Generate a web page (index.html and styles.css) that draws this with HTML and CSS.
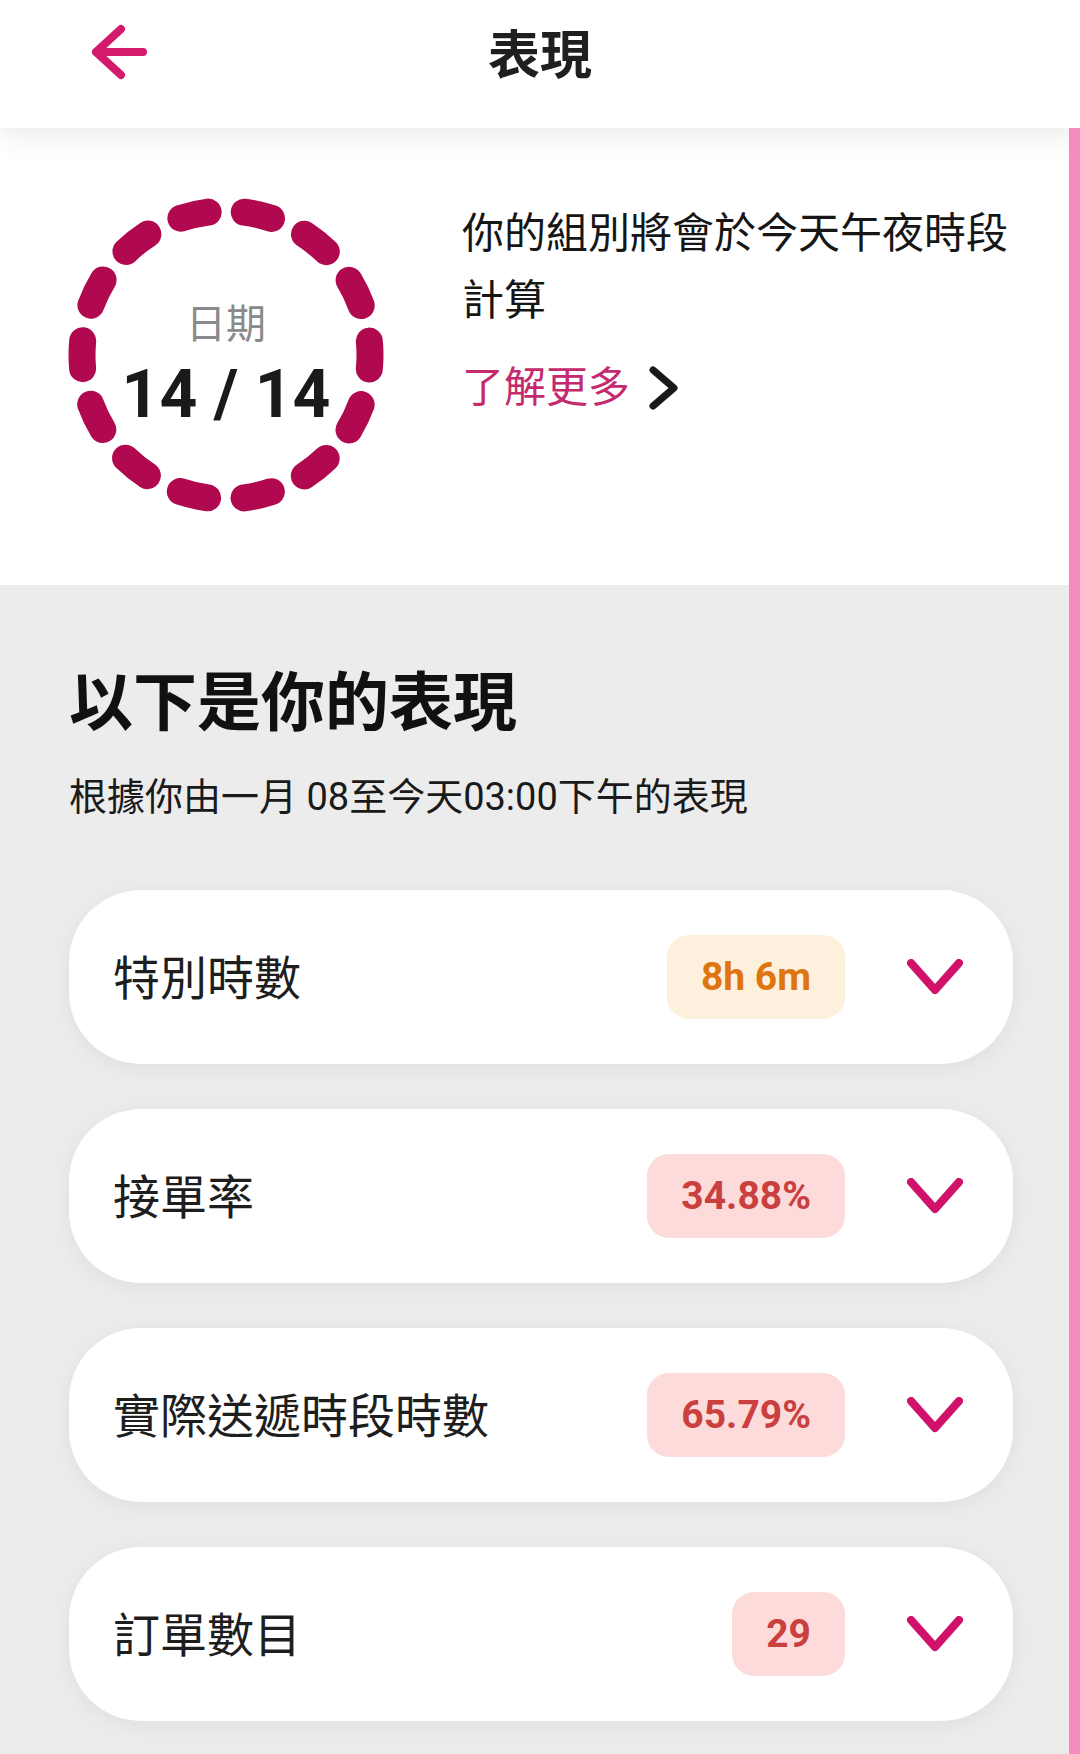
FILE: index.html
```html
<!DOCTYPE html>
<html>
<head>
  <meta charset="utf-8">
  <title>表現</title>
  <link rel="stylesheet" href="styles.css">
</head>

<body>
  <div class="page">
    <header class="topbar">
      <a class="back" href="#">
        <svg width="56" height="56" viewBox="0 0 56 56"><path d="M52 28H5M30 5L5 28l25 23" fill="none" stroke="#d41a6c" stroke-width="8" stroke-linecap="round" stroke-linejoin="round"/></svg>
      </a>
      <h1 class="topbar-title">表現</h1>
      <span></span>
    </header>

    <section class="summary">
      <div class="ring">
        <svg width="320" height="320" viewBox="0 0 320 320">
          <circle cx="160" cy="160" r="144" fill="none" stroke="#b0094f" stroke-width="27" stroke-linecap="round" stroke-dasharray="28 36.63" stroke-dashoffset="-18.3" transform="rotate(-90 160 160)"/>
        </svg>
        <div class="ring-text">
          <span class="ring-label">日期</span>
          <span class="ring-count">14 / 14</span>
        </div>
      </div>
      <div class="summary-info">
        <p class="summary-note">你的組別將會於今天午夜時段計算</p>
        <a class="more-link" href="#">了解更多
          <svg width="32" height="44" viewBox="0 0 32 44"><path d="M5 4l21 18L5 40" fill="none" stroke="#1a1a1a" stroke-width="7" stroke-linecap="round" stroke-linejoin="round"/></svg>
        </a>
      </div>
    </section>

    <section class="stats">
      <h2 class="stats-title">以下是你的表現</h2>
      <p class="stats-sub">根據你由一月 08至今天03:00下午的表現</p>

      <div class="stat-list">
        <div class="stat-card">
          <span class="stat-name">特別時數</span>
          <span class="badge badge-warn">8h 6m</span>
          <svg class="chev" width="56" height="36" viewBox="0 0 56 36"><path d="M4 4l24 27L52 4" fill="none" stroke="#d0126a" stroke-width="8" stroke-linecap="round" stroke-linejoin="round"/></svg>
        </div>
        <div class="stat-card">
          <span class="stat-name">接單率</span>
          <span class="badge badge-bad">34.88%</span>
          <svg class="chev" width="56" height="36" viewBox="0 0 56 36"><path d="M4 4l24 27L52 4" fill="none" stroke="#d0126a" stroke-width="8" stroke-linecap="round" stroke-linejoin="round"/></svg>
        </div>
        <div class="stat-card">
          <span class="stat-name">實際送遞時段時數</span>
          <span class="badge badge-bad">65.79%</span>
          <svg class="chev" width="56" height="36" viewBox="0 0 56 36"><path d="M4 4l24 27L52 4" fill="none" stroke="#d0126a" stroke-width="8" stroke-linecap="round" stroke-linejoin="round"/></svg>
        </div>
        <div class="stat-card">
          <span class="stat-name">訂單數目</span>
          <span class="badge badge-bad">29</span>
          <svg class="chev" width="56" height="36" viewBox="0 0 56 36"><path d="M4 4l24 27L52 4" fill="none" stroke="#d0126a" stroke-width="8" stroke-linecap="round" stroke-linejoin="round"/></svg>
        </div>
      </div>
    </section>

    <div class="scrollbar"></div>
  </div>
</body>
</html>
```

FILE: styles.css
```css
body {margin: 0; overflow: hidden; font-family: Roboto, "Noto Sans CJK TC", sans-serif; color: #1c1c1c; background-color: #ececec;}
.page {position: relative; min-height: 1754px; display: flex; flex-direction: column;}

/* top bar */
.topbar {display: grid; grid-template-columns: 1fr auto 1fr; align-items: center; height: 128px; box-sizing: border-box; padding: 20px 91px 44px; background-color: #fff; position: relative; z-index: 2; box-shadow: 0 6px 28px rgba(0, 0, 0, 0.09);}
.back {display: flex; width: 56px; height: 56px;}
.topbar-title {margin: 0; font-family: "Noto Sans CJK TC", sans-serif; font-size: 52px; line-height: 64px; font-weight: 700; color: #1f1f1f;}

/* summary */
.summary {display: flex; gap: 76px; padding: 67px 0 70px 66px; background-color: #fff;}
.ring {position: relative; width: 320px; height: 320px; flex-shrink: 0;}
.ring svg {position: absolute; left: 0; top: 0;}
.ring-text {position: relative; height: 100%; display: flex; flex-direction: column; align-items: center; justify-content: center;}
.ring-label {margin-top: 20px; font-family: "Noto Sans CJK TC", sans-serif; font-size: 40px; line-height: 44px; color: #8a8a8a;}
.ring-count {margin-top: 16px; font-size: 66px; line-height: 72px; font-weight: 700; color: #1a1a1a;}
.summary-info {width: 560px; padding-top: 5px;}
.summary-note {margin: 0; font-size: 42px; line-height: 67px; color: #161616;}
.more-link {display: inline-flex; align-items: center; gap: 18px; margin-top: 20px; font-size: 42px; line-height: 67px; color: #c42a6e; text-decoration: none;}

/* stats */
.stats {flex: 1; padding: 72px 67px 40px 69px;}
.stats-title {margin: 0; font-family: "Noto Sans CJK TC", sans-serif; font-size: 64px; line-height: 80px; font-weight: 700; color: #111;}
.stats-sub {margin: 36px 0 0; font-size: 38px; line-height: 48px; color: #1a1a1a;}
.stat-list {display: flex; flex-direction: column; gap: 45px; margin-top: 69px;}
.stat-card {display: flex; align-items: center; height: 174px; box-sizing: border-box; padding: 0 50px 0 44px; background-color: #fff; border-radius: 72px; box-shadow: 0 4px 22px rgba(0, 0, 0, 0.06);}
.stat-name {flex: 1; padding-bottom: 6px; font-family: "Noto Sans CJK TC", sans-serif; font-size: 47px; line-height: 47px; color: #1e1e1e;}
.badge {display: flex; align-items: center; height: 84px; padding: 0 34px; border-radius: 22px; font-size: 39px; font-weight: 700; margin-right: 62px;}
.badge-warn {background-color: #fdf0dc; color: #de7510;}
.badge-bad {background-color: #fddbdb; color: #c9403e;}
.chev {flex-shrink: 0;}

.scrollbar {position: absolute; top: 128px; right: 0; bottom: 0; width: 11px; background-color: #f58bbf; z-index: 3;}
```
